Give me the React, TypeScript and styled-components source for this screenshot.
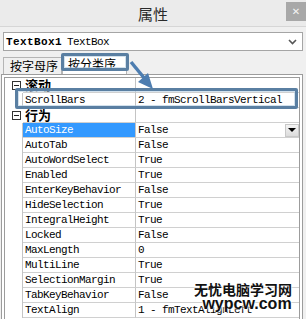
import React from 'react';
import styled, { createGlobalStyle } from 'styled-components';

const Global = createGlobalStyle`
  html, body { margin: 0; padding: 0; background: #f0f0f0; }
  body { width: 306px; height: 319px; overflow: hidden; }
`;

const Window = styled.div`
  position: relative;
  width: 306px;
  height: 319px;
  overflow: hidden;
  background: #f0f0f0;
  display: flex;
  flex-direction: column;
`;

const TitleBar = styled.div`
  flex: none;
  height: 26px;
  display: grid;
  grid-template-columns: 1fr auto 1fr;
  align-items: center;
  background: #ebebeb;
  border-bottom: 1px solid #d6d6d6;
`;

const Title = styled.div`
  grid-column: 2;
  font: 15px "Noto Sans CJK SC", sans-serif;
  color: #2a2a2a;
`;

const Close = styled.div`
  grid-column: 3;
  justify-self: end;
  align-self: start;
  margin-top: 2px;
  width: 20px;
  height: 19px;
  background: #a8a8a8;
  color: #f4f4f4;
  display: flex;
  align-items: center;
  justify-content: center;
  font: bold 10px "DejaVu Sans", sans-serif;
`;

const Combo = styled.div`
  flex: none;
  margin: 5px 3px 0 3px;
  height: 17px;
  border: 1px solid #a5a5a5;
  background: #fff;
  display: flex;
  align-items: center;
  padding: 0 5px 0 2px;
  font: 11px "Liberation Mono", monospace;
  letter-spacing: -0.6px;
  color: #000;
`;

const ComboBold = styled.span`
  font-weight: bold;
  letter-spacing: 0.4px;
  margin-right: 5px;
`;

const ComboText = styled.span`
  flex: 1;
`;

const Tabs = styled.div`
  flex: none;
  margin: 2px 3px 0 3px;
  height: 21px;
  display: flex;
  align-items: flex-end;
`;

const Tab = styled.div<{ $active?: boolean }>`
  height: ${p => (p.$active ? 19 : 17)}px;
  box-sizing: border-box;
  padding: 0 ${p => (p.$active ? 10 : 3)}px 0 ${p => (p.$active ? 5 : 6)}px;
  border: 1px solid #b5b5b5;
  border-bottom: none;
  background: ${p => (p.$active ? '#ffffff' : '#f0f0f0')};
  font: 12px/16px "Noto Sans CJK SC", sans-serif;
  color: #000;
  white-space: nowrap;
`;

const Frame = styled.div`
  flex: 1;
  margin: 0 3px 0 1px;
  border: 4px double #9c9c9c;
  border-bottom: none;
  background: #fff;
  overflow: hidden;
`;

const Row = styled.div`
  display: grid;
  grid-template-columns: 18px 113px 1fr;
  height: 15px;
`;

const Gutter = styled.div<{ $line?: boolean }>`
  border-right: 1px solid ${p => (p.$line ? '#c4c4c4' : 'transparent')};
  display: flex;
  align-items: center;
  justify-content: flex-end;
  padding-right: 1px;
`;

const MinusBox = styled.div`
  width: 7px;
  height: 7px;
  border: 1px solid #333;
  position: relative;
  &::after {
    content: '';
    position: absolute;
    left: 1px;
    right: 1px;
    top: 3px;
    height: 1px;
    background: #222;
  }
`;

const NameCell = styled.div<{ $selected?: boolean }>`
  border-right: 1px solid #c4c4c4;
  border-bottom: 1px solid #d0d0d0;
  background: ${p => (p.$selected ? '#3399ff' : '#fff')};
  color: ${p => (p.$selected ? '#fff' : '#000')};
  font: 11px/15px "Liberation Mono", monospace;
  letter-spacing: -0.6px;
  padding-left: 2px;
  white-space: nowrap;
  overflow: hidden;
`;

const CatCell = styled.div`
  border-right: 1px solid #c4c4c4;
  border-bottom: 1px solid #d0d0d0;
  font: bold 13px/14px "Noto Sans CJK SC", sans-serif;
  color: #000;
  padding-left: 2px;
  white-space: nowrap;
`;

const ValueCell = styled.div`
  border-bottom: 1px solid #d0d0d0;
  font: 11px/15px "Liberation Mono", monospace;
  letter-spacing: -0.6px;
  color: #000;
  padding-left: 2px;
  white-space: nowrap;
  overflow: hidden;
  display: flex;
  align-items: center;
  justify-content: space-between;
`;

const DropButton = styled.div`
  width: 14px;
  height: 13px;
  box-sizing: border-box;
  border: 1px solid #c8c8c8;
  background: linear-gradient(#f4f4f4, #dcdcdc);
  display: flex;
  align-items: center;
  justify-content: center;
  &::after {
    content: '';
    border-left: 4px solid transparent;
    border-right: 4px solid transparent;
    border-top: 4px solid #000;
  }
`;

const Callout = styled.div<{ $l: number; $t: number; $w: number; $h: number }>`
  position: absolute;
  left: ${p => p.$l}px;
  top: ${p => p.$t}px;
  width: ${p => p.$w}px;
  height: ${p => p.$h}px;
  box-sizing: border-box;
  border: 3px solid #5a7fa2;
  border-radius: 2px;
  box-shadow: inset 0 0 0 1px rgba(180, 205, 225, 0.6);
  pointer-events: none;
`;

const ArrowSvg = styled.svg`
  position: absolute;
  left: 0;
  top: 0;
  pointer-events: none;
`;

const Watermark = styled.div`
  position: absolute;
  left: 194px;
  top: 281px;
  display: flex;
  flex-direction: column;
  align-items: center;
  color: #111;
  text-shadow: 0 0 2px #fff, 0 0 2px #fff, 0 0 3px #fff;
`;

const WmCn = styled.div`
  font: bold 14px/16px "Noto Sans CJK SC", sans-serif;
`;

const WmEn = styled.div`
  font: bold 16px/14px "Liberation Sans", Arial, sans-serif;
  margin-left: 8px;
`;

type Item =
  | { cat: string }
  | { name: string; value: string; selected?: boolean };

const items: Item[] = [
  { cat: '滚动' },
  { name: 'ScrollBars', value: '2 - fmScrollBarsVertical' },
  { cat: '行为' },
  { name: 'AutoSize', value: 'False', selected: true },
  { name: 'AutoTab', value: 'False' },
  { name: 'AutoWordSelect', value: 'True' },
  { name: 'Enabled', value: 'True' },
  { name: 'EnterKeyBehavior', value: 'False' },
  { name: 'HideSelection', value: 'True' },
  { name: 'IntegralHeight', value: 'True' },
  { name: 'Locked', value: 'False' },
  { name: 'MaxLength', value: '0' },
  { name: 'MultiLine', value: 'True' },
  { name: 'SelectionMargin', value: 'True' },
  { name: 'TabKeyBehavior', value: 'False' },
  { name: 'TextAlign', value: '1 - fmTextAlignLeft' },
];

export default function App() {
  return (
    <Window>
      <Global />
      <TitleBar>
        <Title>属性</Title>
        <Close>✕</Close>
      </TitleBar>
      <Combo>
        <ComboBold>TextBox1</ComboBold>
        <ComboText>TextBox</ComboText>
        <svg width="9" height="6" viewBox="0 0 9 6">
          <path d="M1 1 L4.5 4.5 L8 1" fill="none" stroke="#555" strokeWidth="1.6" />
        </svg>
      </Combo>
      <Tabs>
        <Tab>按字母序</Tab>
        <Tab $active>按分类序</Tab>
      </Tabs>
      <Frame>
        {items.map((it, i) =>
          'cat' in it ? (
            <Row key={i}>
              <Gutter>
                <MinusBox />
              </Gutter>
              <CatCell>{it.cat}</CatCell>
              <ValueCell />
            </Row>
          ) : (
            <Row key={i}>
              <Gutter $line />
              <NameCell $selected={it.selected}>{it.name}</NameCell>
              <ValueCell>
                <span>{it.value}</span>
                {it.selected && <DropButton />}
              </ValueCell>
            </Row>
          )
        )}
      </Frame>
      <Callout $l={61} $t={53} $w={68} $h={18} />
      <Callout $l={15} $t={88} $w={283} $h={21} />
      <ArrowSvg width="306" height="319" viewBox="0 0 306 319">
        <line x1="131" y1="62" x2="145" y2="79" stroke="#4d7db0" strokeWidth="3.5" />
        <polygon points="153,89 138,82 148,73" fill="#4d7db0" />
      </ArrowSvg>
      <Watermark>
        <WmCn>无忧电脑学习网</WmCn>
        <WmEn>wypcw.com</WmEn>
      </Watermark>
    </Window>
  );
}
